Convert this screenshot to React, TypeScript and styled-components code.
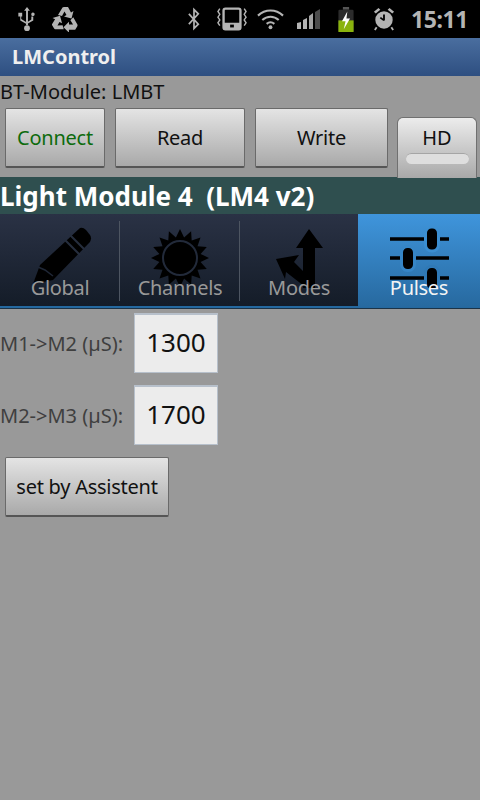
import React from "react";
import styled, { createGlobalStyle } from "styled-components";

const Global = createGlobalStyle`
  html, body { margin: 0; padding: 0; background: #9a9a9a; }
  body { font-family: "Noto Sans", "Open Sans", sans-serif; }
`;

const Screen = styled.div`
  width: 480px;
  height: 800px;
  overflow: hidden;
  background: #999999;
`;

const StatusBar = styled.div`
  height: 38px;
  background: #000;
  display: flex;
  align-items: center;
  padding: 0 12px 0 18px;
  color: #b4b4b4;
`;

const StatusLeft = styled.div`
  display: flex;
  align-items: center;
  gap: 16px;
  flex: 1;
`;

const StatusRight = styled.div`
  display: flex;
  align-items: center;
`;

const StatusIcon = styled.svg<{ $ml?: number }>`
  display: block;
  flex: none;
  margin-left: ${(p) => p.$ml ?? 0}px;
`;

const Clock = styled.span`
  font-size: 23px;
  font-weight: 700;
  color: #b4b4b4;
  margin-left: 16px;
  line-height: 38px;
  letter-spacing: -0.4px;
`;

const TitleBar = styled.div`
  height: 38px;
  background: linear-gradient(#4a6e9f, #2e4f81);
  color: #efefef;
  font-size: 20px;
  font-weight: 700;
  line-height: 38px;
  padding-left: 12px;
`;

const ModuleLine = styled.div`
  height: 32px;
  padding-top: 2px;
  box-sizing: border-box;
  font-size: 20px;
  line-height: 27px;
  color: #111;
`;

const ButtonRow = styled.div`
  height: 69px;
  display: flex;
  padding-left: 5px;
  align-items: flex-start;
`;

const Btn = styled.div<{ $w: number; $ml?: number; $color?: string }>`
  width: ${(p) => p.$w}px;
  margin-left: ${(p) => p.$ml ?? 0}px;
  height: 60px;
  box-sizing: border-box;
  border: 1px solid #6a6a6a;
  border-bottom: 2px solid #555;
  border-radius: 2px;
  background: linear-gradient(#e4e4e4, #a9a9a9);
  color: ${(p) => p.$color ?? "#111"};
  font-size: 20px;
  letter-spacing: -0.25px;
  display: flex;
  align-items: center;
  justify-content: center;
`;

const Toggle = styled.div`
  width: 80px;
  height: 61px;
  margin: 9px 0 0 9px;
  box-sizing: border-box;
  border: 1px solid #707070;
  border-bottom: none;
  border-radius: 6px 6px 0 0;
  background: linear-gradient(#ececec, #a9a9a9);
  color: #111;
  font-size: 20px;
  text-align: center;
  line-height: 30px;
  padding-top: 5px;
`;

const ToggleBar = styled.div`
  width: 63px;
  height: 11px;
  margin: 0 auto;
  border-radius: 6px;
  border-top: 1px solid #a5a5a5;
  box-sizing: border-box;
  background: #dedede;
`;

const ModuleHeader = styled.div`
  height: 37px;
  background: #2f4f4f;
  color: #fff;
  font-size: 26px;
  font-weight: 700;
  line-height: 38px;
  white-space: pre;
`;

const TabStrip = styled.div`
  height: 95px;
  display: flex;
  align-items: flex-start;
  background: #24689f;
  border-bottom: 1px solid #1d3346;
  box-sizing: border-box;
`;

const Tab = styled.div<{ $w: number; $active?: boolean }>`
  width: ${(p) => p.$w}px;
  height: ${(p) => (p.$active ? 93 : 92)}px;
  position: relative;
  box-sizing: border-box;
  background: ${(p) =>
    p.$active
      ? "linear-gradient(#3f95dc, #27699f)"
      : "linear-gradient(#2a3245, #141c28)"};
`;

const TabDivider = styled.div`
  position: absolute;
  right: 0;
  top: 7px;
  bottom: 5px;
  width: 1px;
  background: #4d5561;
`;

const TabIcon = styled.svg<{ $top?: number; $left?: number }>`
  position: absolute;
  left: ${(p) => p.$left ?? 28}px;
  top: ${(p) => p.$top ?? 12}px;
  width: 64px;
  height: 64px;
`;

const TabLabel = styled.div<{ $active?: boolean }>`
  position: absolute;
  left: 0;
  right: 0;
  top: 60px;
  text-align: center;
  font-size: 20px;
  line-height: 27px;
  letter-spacing: -0.3px;
  color: ${(p) => (p.$active ? "#f4f4f4" : "#999999")};
`;

const Form = styled.div`
  display: flex;
  flex-direction: column;
  padding-top: 4px;
`;

const FieldRow = styled.div`
  display: flex;
  align-items: center;
  height: 60px;
  margin-bottom: 12px;
`;

const FieldLabel = styled.div`
  width: 134px;
  font-size: 20px;
  color: #3f3f3f;
`;

const FieldBox = styled.div`
  width: 84px;
  height: 60px;
  box-sizing: border-box;
  background: #ececec;
  border: 1px solid #b7c0cb;
  border-top: 2px solid #b7c0cb;
  color: #111;
  font-size: 26px;
  padding-bottom: 4px;
  display: flex;
  align-items: center;
  justify-content: center;
`;

const AssistRow = styled.div`
  padding-left: 5px;
`;

// 16 pointed sun outline
const sunPoints = Array.from({ length: 32 }, (_, i) => {
  const r = i % 2 === 0 ? 29 : 21;
  const a = (i * Math.PI) / 16 - Math.PI / 2;
  return `${(32 + r * Math.cos(a)).toFixed(1)},${(32 + r * Math.sin(a)).toFixed(1)}`;
}).join(" ");

const recycleArrow = "M6 9L10.500 1.500Q11 1 12 1H16L19 6.500L21.500 5L19.500 12.500L12 10.500L14.500 9L12.500 5.500L10 10z";

function App() {
  return (
    <Screen>
      <Global />
      <StatusBar>
        <StatusLeft>
          <StatusIcon width="18" height="25" viewBox="0 0 18 26" fill="#b4b4b4">
            <path d="M9 0l3 4h-2v15h-2V4H6z" />
            <circle cx="9" cy="22" r="3" />
            <path d="M0 6h4v4H3v2.500l5 3v2l-6-3.500V10H0z" />
            <path d="M16 6a1.800 1.800 0 1 1-2.600 1.700A1.800 1.800 0 0 1 16 6zM15.500 10v4l-6 3.500v-2l4-2.500v-3z" />
          </StatusIcon>
          <StatusIcon width="26" height="26" viewBox="0 0 26 26" fill="#b4b4b4">
            <path d={recycleArrow} />
            <path d={recycleArrow} transform="rotate(120 13 14.500)" />
            <path d={recycleArrow} transform="rotate(240 13 14.500)" />
          </StatusIcon>
        </StatusLeft>
        <StatusRight>
          <StatusIcon width="12" height="24" viewBox="0 0 14 26" fill="none" stroke="#b4b4b4" strokeWidth="2">
            <path d="M1 7l11 12-5 5V2l5 5L1 19" />
          </StatusIcon>
          <StatusIcon $ml={17} width="30" height="24" viewBox="0 0 32 24" fill="none" stroke="#b4b4b4" strokeWidth="1.500">
            <path d="M3 1l-2 3 2 3-2 3 2 3-2 3 2 3" />
            <path d="M29 1l2 3-2 3 2 3-2 3 2 3-2 3" />
            <rect x="7" y="1" width="18" height="22" rx="2" strokeWidth="2.500" />
            <rect x="7" y="16" width="18" height="7" fill="#b4b4b4" stroke="none" />
            <rect x="14" y="18" width="4" height="3" fill="#000" stroke="none" />
          </StatusIcon>
          <StatusIcon $ml={10} width="27" height="22" viewBox="0 0 28 22" fill="none" stroke="#b4b4b4" strokeWidth="2.200">
            <path d="M1 7.500c7.500-7 18.500-7 26 0" />
            <path d="M5.500 12c5-4.500 12-4.500 17 0" />
            <path d="M10 16c2.500-2 5.500-2 8 0" />
            <circle cx="14" cy="19.500" r="2" fill="#b4b4b4" stroke="none" />
          </StatusIcon>
          <StatusIcon $ml={13} width="23" height="22" viewBox="0 0 23 22">
            <path d="M0 15l4-1v7H0z" fill="#b4b4b4" />
            <path d="M6 12l4-2v11H6z" fill="#b4b4b4" />
            <path d="M12 8l4-3v16h-4z" fill="#a4a4a4" />
            <path d="M18 4l5-3v20h-5z" fill="#4c4c4c" />
          </StatusIcon>
          <StatusIcon $ml={18} width="16" height="25" viewBox="0 0 17 28">
            <rect x="5" y="0" width="7" height="3" fill="#555" />
            <rect x="0" y="3" width="17" height="25" rx="1.500" fill="#2c2c2c" />
            <rect x="0" y="15" width="17" height="13" fill="#8ab30d" />
            <path d="M10 5l-6 11h4l-2 9 7-12H9z" fill="#fff" />
          </StatusIcon>
          <StatusIcon $ml={19} width="22" height="26" viewBox="0 0 24 26">
            <circle cx="12" cy="14" r="9.500" fill="#b4b4b4" />
            <path d="M1 5l5-4 2 2-5 4zM23 5l-5-4-2 2 5 4z" fill="#b4b4b4" />
            <path d="M12 8v6.500M12 14.500l-4-3" stroke="#000" strokeWidth="2" fill="none" />
            <path d="M4 22l-2 3M20 22l2 3" stroke="#b4b4b4" strokeWidth="2" />
          </StatusIcon>
          <Clock>15:11</Clock>
        </StatusRight>
      </StatusBar>
      <TitleBar>LMControl</TitleBar>
      <ModuleLine>BT-Module: LMBT</ModuleLine>
      <ButtonRow>
        <Btn $w={100} $color="#0d6b0d">Connect</Btn>
        <Btn $w={130} $ml={10}>Read</Btn>
        <Btn $w={133} $ml={10}>Write</Btn>
        <Toggle>
          HD
          <ToggleBar />
        </Toggle>
      </ButtonRow>
      <ModuleHeader>Light Module 4  (LM4 v2)</ModuleHeader>
      <TabStrip>
        <Tab $w={120}>
          <TabIcon viewBox="0 0 64 64">
            <path d="M52 2Q55 1 58 4L62 9Q64 12 62 16L25 54L5 58L12 39z" fill="#000" />
            <path d="M37 14L52 29M42 9L56 23" stroke="#252d3d" strokeWidth="2" />
            <path d="M10 41L17 44L25 50" stroke="#1f2736" strokeWidth="1.500" fill="none" />
          </TabIcon>
          <TabLabel>Global</TabLabel>
          <TabDivider />
        </Tab>
        <Tab $w={120}>
          <TabIcon viewBox="0 0 64 64">
            <polygon points={sunPoints} fill="#000" />
            <circle cx="32" cy="32" r="17" fill="#000" stroke="#222a3a" strokeWidth="2" />
          </TabIcon>
          <TabLabel>Channels</TabLabel>
          <TabDivider />
        </Tab>
        <Tab $w={118}>
          <TabIcon viewBox="0 0 64 64" $left={27}>
            <path d="M42 3L56 22H48V62H36V22H29z" fill="#000" />
            <path d="M9 33L32 29L27 36L37 46V60L19 46L18 53z" fill="#000" />
          </TabIcon>
          <TabLabel>Modes</TabLabel>
        </Tab>
        <Tab $w={122} $active>
          <TabIcon viewBox="0 0 64 64" $top={14} $left={30}>
            <path d="M2 11h59M2 30h59M2 50h59" stroke="#000" strokeWidth="3.500" />
            <rect x="37.500" y="-1" width="13" height="24" rx="6" fill="#000" stroke="#3b8ed1" strokeWidth="3" />
            <rect x="13.500" y="18.500" width="13" height="24" rx="6" fill="#000" stroke="#3685c6" strokeWidth="3" />
            <rect x="37.500" y="38.500" width="13" height="24" rx="6" fill="#000" stroke="#2f79b6" strokeWidth="3" />
          </TabIcon>
          <TabLabel $active>Pulses</TabLabel>
        </Tab>
      </TabStrip>
      <Form>
        <FieldRow>
          <FieldLabel>M1-&gt;M2 (µS):</FieldLabel>
          <FieldBox>1300</FieldBox>
        </FieldRow>
        <FieldRow>
          <FieldLabel>M2-&gt;M3 (µS):</FieldLabel>
          <FieldBox>1700</FieldBox>
        </FieldRow>
        <AssistRow>
          <Btn $w={164}>set by Assistent</Btn>
        </AssistRow>
      </Form>
    </Screen>
  );
}

export default App;
